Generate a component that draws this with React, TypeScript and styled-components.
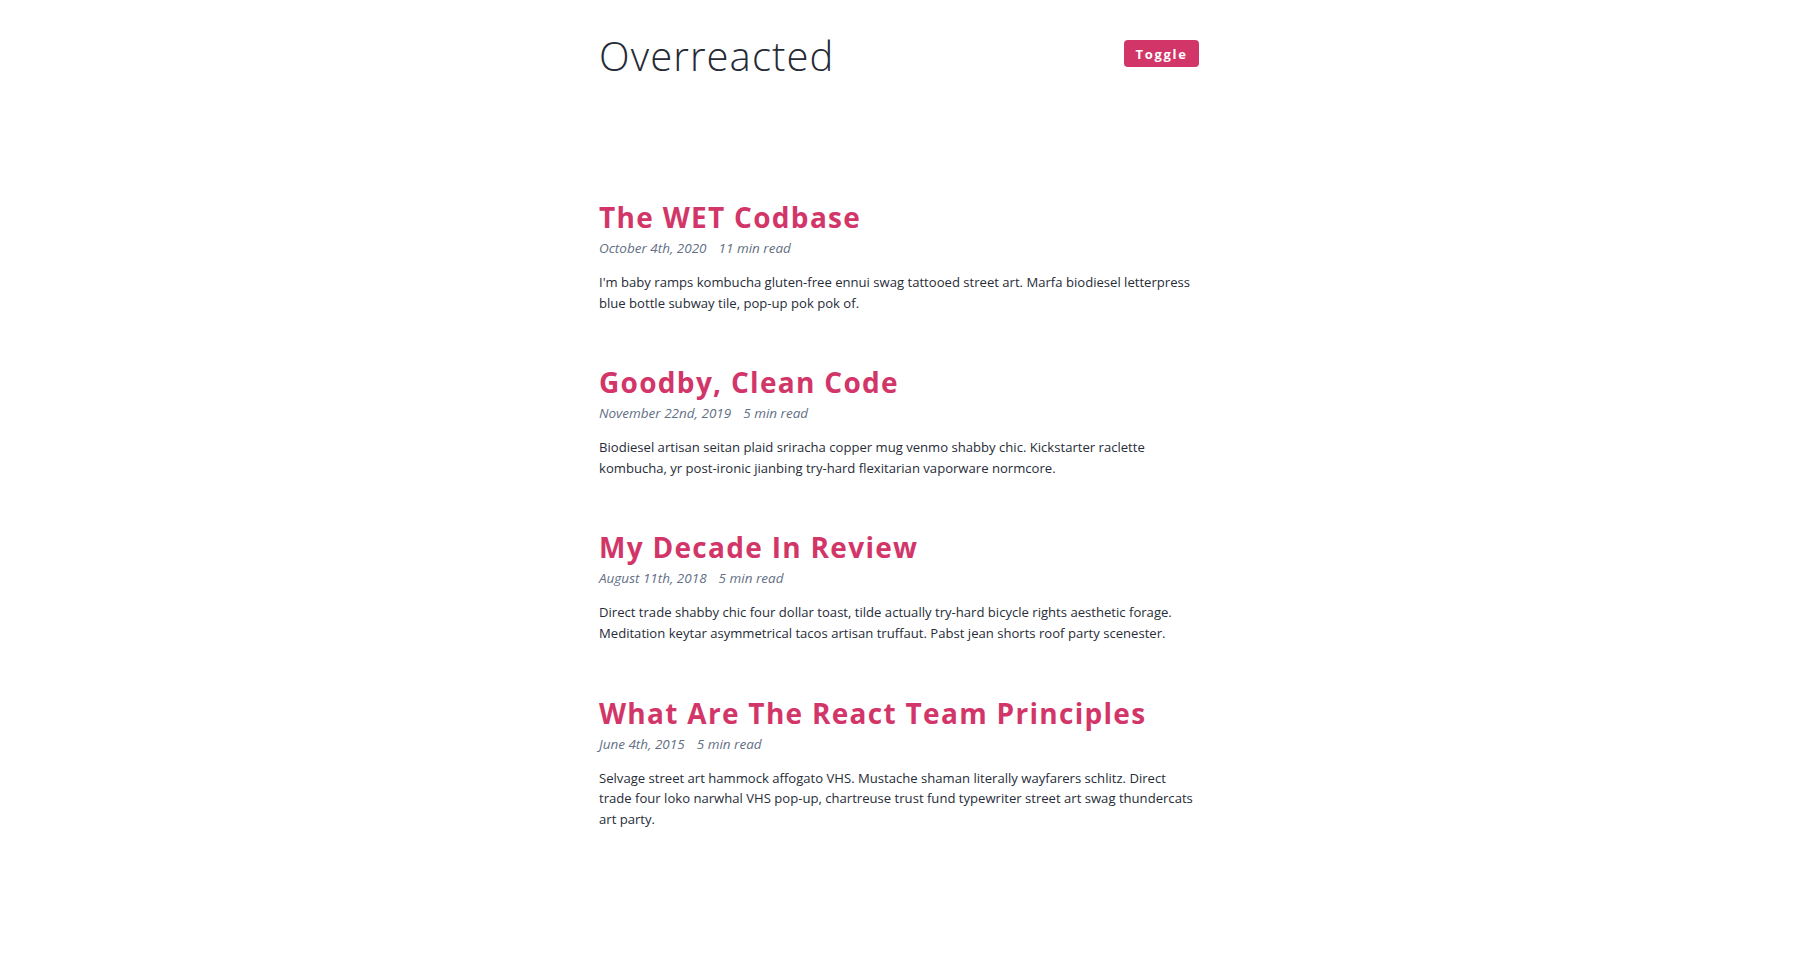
import React from "react";
import styled, { createGlobalStyle } from "styled-components";

const GlobalStyle = createGlobalStyle`
  html, body {
    margin: 0;
    padding: 0;
    background: #ffffff;
  }
  body {
    font-family: "Open Sans", "Noto Sans", "Liberation Sans", sans-serif;
    color: #2d3748;
    -webkit-font-smoothing: antialiased;
  }
`;

const Page = styled.div`
  width: 600px;
  margin-left: calc(50% - 304px);
  padding-top: 36px;
  padding-bottom: 80px;
`;

const Header = styled.header`
  display: flex;
  align-items: flex-start;
  justify-content: space-between;
`;

const SiteTitle = styled.h1`
  margin: 0;
  font-size: 40px;
  line-height: 40px;
  font-weight: 300;
  letter-spacing: 1.1px;
  color: #252a35;
`;

const ToggleButton = styled.button`
  display: inline-flex;
  align-items: center;
  justify-content: center;
  width: 75px;
  height: 27px;
  margin-top: 4px;
  padding: 0;
  border: none;
  border-radius: 4px;
  background: #d23669;
  color: #ffffff;
  font-family: inherit;
  font-size: 13px;
  font-weight: 700;
  letter-spacing: 1.7px;
  cursor: pointer;
`;

const PostList = styled.main`
  display: flex;
  flex-direction: column;
  gap: 53px;
  margin-top: 125px;
`;

const Post = styled.article`
  display: flex;
  flex-direction: column;
`;

const PostTitle = styled.h2`
  margin: 0;
  font-size: 28px;
  line-height: 32px;
  font-weight: 700;
  letter-spacing: 1.3px;
  color: #d23669;
`;

const Meta = styled.div`
  display: flex;
  gap: 12px;
  margin-top: 5px;
  font-size: 13.5px;
  line-height: 20px;
  font-style: italic;
  color: #637085;
`;

const Excerpt = styled.p`
  margin: 14px 0 0;
  font-size: 13.1px;
  line-height: 20.6px;
  color: #272c37;
`;

type PostData = {
  title: string;
  date: string;
  read: string;
  excerpt: string;
};

const posts: PostData[] = [
  {
    title: "The WET Codbase",
    date: "October 4th, 2020",
    read: "11 min read",
    excerpt:
      "I'm baby ramps kombucha gluten-free ennui swag tattooed street art. Marfa biodiesel letterpress blue bottle subway tile, pop-up pok pok of.",
  },
  {
    title: "Goodby, Clean Code",
    date: "November 22nd, 2019",
    read: "5 min read",
    excerpt:
      "Biodiesel artisan seitan plaid sriracha copper mug venmo shabby chic. Kickstarter raclette kombucha, yr post-ironic jianbing try-hard flexitarian vaporware normcore.",
  },
  {
    title: "My Decade In Review",
    date: "August 11th, 2018",
    read: "5 min read",
    excerpt:
      "Direct trade shabby chic four dollar toast, tilde actually try-hard bicycle rights aesthetic forage. Meditation keytar asymmetrical tacos artisan truffaut. Pabst jean shorts roof party scenester.",
  },
  {
    title: "What Are The React Team Principles",
    date: "June 4th, 2015",
    read: "5 min read",
    excerpt:
      "Selvage street art hammock affogato VHS. Mustache shaman literally wayfarers schlitz. Direct trade four loko narwhal VHS pop-up, chartreuse trust fund typewriter street art swag thundercats art party.",
  },
];

export default function App() {
  return (
    <>
      <GlobalStyle />
      <Page>
        <Header>
          <SiteTitle>Overreacted</SiteTitle>
          <ToggleButton type="button">Toggle</ToggleButton>
        </Header>
        <PostList>
          {posts.map((p) => (
            <Post key={p.title}>
              <PostTitle>{p.title}</PostTitle>
              <Meta>
                <span>{p.date}</span>
                <span>{p.read}</span>
              </Meta>
              <Excerpt>{p.excerpt}</Excerpt>
            </Post>
          ))}
        </PostList>
      </Page>
    </>
  );
}
